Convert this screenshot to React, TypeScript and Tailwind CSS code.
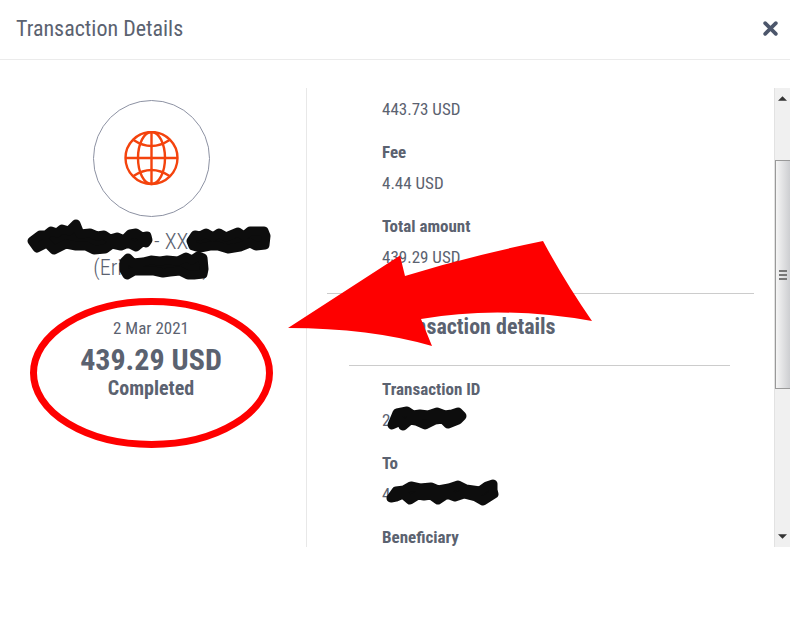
const amounts = [
{ label: "Fee", value: "4.44 USD" },
{ label: "Total amount", value: "439.29 USD" },
]

const details = [
{ label: "Transaction ID", value: "2" },
{ label: "To", value: "4" },
{ label: "Beneficiary", value: "" },
]

const blots = [
"32,241 40,235 46,235 51,231 57,233 62,229 69,231 76,224 80,234 90,233 97,236 104,235 110,239 117,237 124,240 130,234 136,233 142,237 147,236 148,240 146,243 142,242 136,247 128,243 121,246 112,244 105,249 94,250 86,246 76,246 66,244 54,250 47,243 37,248",
"191,241 195,235 200,236 206,233 213,237 219,233 226,237 238,232 244,236 250,231 264,231 266,236 265,245 256,246 250,243 240,247 228,249 218,246 210,246 200,248 193,246",
"124,262 128,258 133,263 143,262 151,260 160,261 167,260 178,261 186,257 192,260 198,256 203,258 204,269 203,274 194,275 188,275 180,271 170,272 163,273 154,271 142,271 134,271 127,275 124,270",
"392,425 397,413 407,411 413,415 420,414 428,415 437,412 445,415 452,414 458,412 462,416 458,420 448,424 443,419 435,420 425,425 416,421 410,420 403,426 401,421",
"391,498 396,491 404,490 411,486 420,488 431,487 438,490 449,488 458,485 466,489 480,491 487,486 493,484 493,490 494,494 483,501 476,497 464,494 455,497 447,494 438,500 431,495 424,496 418,495 410,500 403,494 396,497",
]

function Globe() {
return (
<svg width="56" height="56" viewBox="0 0 56 56" fill="none" stroke="#f4430d" strokeWidth="2.4">
<circle cx="28.5" cy="27" r="26" />
<ellipse cx="28.5" cy="27" rx="13.5" ry="26" />
<path d="M28.5 1v52M2.5 27h52" />
<path d="M10.5 9Q28.5 21 46.5 9M10.5 45Q28.5 33 46.5 45" />
</svg>
)
}

function Row({ label, value }: { label: string; value: string }) {
return (
<div className="pt-[18px]">
<dt className="leading-5 font-bold">{label}</dt>
{value && <dd className="pt-1.5">{value}</dd>}
</div>
)
}

function ScrollBar() {
return (
<div className="flex w-4 shrink-0 flex-col border-l border-[#e2e2e2] bg-[#f0f0f0]" aria-hidden="true">
<div className="flex h-[72px] justify-center pt-2">
<svg width="9" height="5" viewBox="0 0 10 5"><path d="M0 5L5 0L10 5Z" fill="#333" /></svg>
</div>
<div className="flex h-[229px] flex-col items-center justify-center gap-0.5 border border-r-0 border-[#999] bg-linear-to-r from-[#f5f5f5] to-[#cdced1]">
<div className="h-0.5 w-2 bg-[#777]"></div>
<div className="h-0.5 w-2 bg-[#777]"></div>
<div className="h-0.5 w-2 bg-[#777]"></div>
</div>
<div className="flex flex-1 items-end justify-center pb-2">
<svg width="9" height="5" viewBox="0 0 10 5"><path d="M0 0L5 5L10 0Z" fill="#333" /></svg>
</div>
</div>
)
}

// pen marks drawn over the dialog
function Markup() {
return (
<svg className="pointer-events-none absolute top-0 left-0" width="790" height="626" viewBox="0 0 790 626" aria-hidden="true">
<g fill="#0d0d0d" stroke="#0d0d0d" strokeWidth="9" strokeLinejoin="round">
{blots.map((points) => (
<polygon key={points} points={points} />
))}
</g>
<ellipse cx="151.5" cy="373" rx="118" ry="71.5" fill="none" stroke="#fe0000" strokeWidth="7" />
<path d="M288 328L400 255.5L405 276Q470 256 543 241Q565 282 592 321Q500 305 421 319L432 346Q370 328 288 328Z" fill="#fe0000" />
</svg>
)
}

export default function App() {
return (

<div className="relative min-h-screen overflow-hidden bg-white font-['Roboto_Condensed','Liberation_Sans_Narrow',Roboto,sans-serif] text-[#5b6270]">

<header className="flex h-[60px] items-center justify-between border-b border-[#ebebeb] pr-2.5 pb-0.5 pl-4">
<h1 className="text-[22px]">Transaction Details</h1>
<button type="button" aria-label="Close" className="p-0.5 text-[#4c566b]">
<svg width="15" height="15" viewBox="0 0 14 14" stroke="currentColor" strokeWidth="3.4" strokeLinecap="round"><path d="M2 2L12 12M12 2L2 12" /></svg>
</button>
</header>

<main className="mt-7 flex h-[459px]">

<section className="w-[307px] shrink-0 border-r border-[#e8e8e8] pt-3 pr-1 text-center">
<div className="mx-auto mb-3 flex size-[117px] items-center justify-center rounded-full border border-[#8d92a3]">
<Globe />
</div>
<p className="text-[22px] leading-[26px] font-light">
<span className="invisible">XXXXXXXXX</span>
{" - XX"}
<span className="invisible">XXXXXX</span>
<br />
(Eri
<span className="invisible">XXXXXXx</span>
)
</p>
<p className="mt-[35px] text-[17px] leading-6">2 Mar 2021</p>
<p className="text-3xl leading-10 font-bold">439.29 USD</p>
<p className="text-xl leading-4 font-bold">Completed</p>
</section>

<section className="min-w-0 flex-1 overflow-hidden pt-1.5 text-[17px] leading-[30px]">
<dl className="pl-[75px]">
<dd>443.73 USD</dd>
{amounts.map((a) => (
<Row key={a.label} {...a} />
))}
</dl>
<hr className="mt-[21px] mr-5 ml-5 border-[#ccc]" />
<h2 className="mr-11 ml-[42px] flex h-[72px] items-center gap-3.5 border-b border-[#ccc] pb-1.5 pl-3 text-[22px] font-bold">
<svg width="12" height="8" viewBox="0 0 12 8" fill="none" stroke="currentColor" strokeWidth="3"><path d="M1 1L6 6L11 1" /></svg>
Transaction details
</h2>
<dl className="-mt-[5px] pl-[75px]">
{details.map((d) => (
<Row key={d.label} {...d} />
))}
</dl>
</section>

<ScrollBar />

</main>

<Markup />

</div>

)
}
